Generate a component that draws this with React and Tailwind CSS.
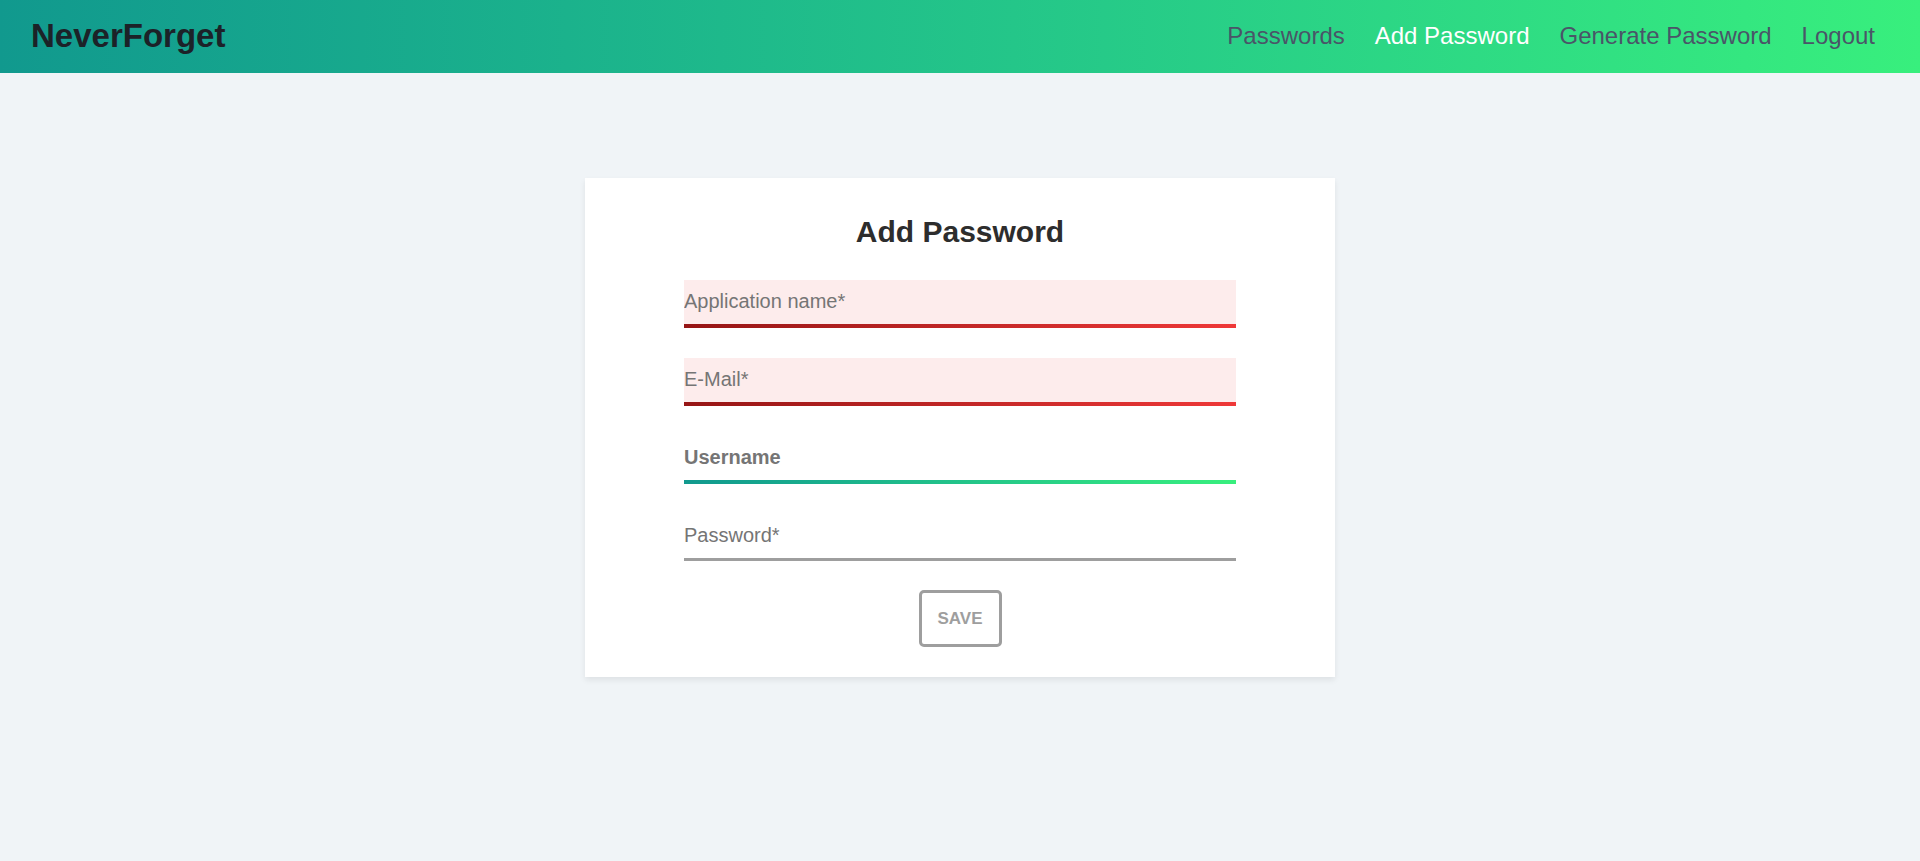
import { useState } from 'react';

const links = ['Passwords', 'Add Password', 'Generate Password', 'Logout'];

const Field = ({ placeholder, type = 'text', bar, filled, bold }) => (
    <div className="flex flex-col w-full">
        <input
            type={type}
            placeholder={placeholder}
            className={`w-full h-[44px] px-0 pb-[2px] text-[20px] outline-none text-[#333] placeholder:text-[#757575] ${filled ? 'bg-[#fdecec]' : 'bg-white'} ${bold ? 'placeholder:font-bold placeholder:text-[#666]' : ''}`}
        />
        <div className={bar} />
    </div>
);

const App = () => {
    const [active] = useState('Add Password');

    return (
        <div className="min-h-[861px] bg-[#f0f4f7] font-['Liberation_Sans',Arial,sans-serif]">
            <header className="h-[73px] flex items-center justify-between pl-[31px] pr-[45px] bg-linear-to-r from-[#11998e] to-[#38ef7d]">
                <div className="text-[33px] font-bold text-[#1c2228] leading-none -mt-[3px]">NeverForget</div>
                <nav className="flex items-center gap-[30px] -mt-[2px]">
                    {links.map(link => (
                        <a
                            key={link}
                            href="#"
                            className={`text-[24px] leading-none ${link === active ? 'text-white' : 'text-[#4a5568]'}`}
                        >
                            {link}
                        </a>
                    ))}
                </nav>
            </header>

            <div className="flex justify-center pt-[105px]">
                <form className="w-[750px] bg-white shadow-[0_3px_6px_rgba(0,0,0,0.08)] pt-[36px] pb-[30px] flex flex-col items-center">
                    <h1 className="text-[30px] leading-[36px] font-bold text-[#2d2d2d] mb-[30px]">Add Password</h1>

                    <div className="w-[552px] flex flex-col gap-[30px]">
                        <Field placeholder="Application name*" filled bar="h-[4px] bg-linear-to-r from-[#961515] to-[#ef3838]" />
                        <Field placeholder="E-Mail*" type="email" filled bar="h-[4px] bg-linear-to-r from-[#961515] to-[#ef3838]" />
                        <Field placeholder="Username" bold bar="h-[4px] bg-linear-to-r from-[#11998e] to-[#38ef7d]" />
                        <Field placeholder="Password*" type="password" bar="h-[3px] bg-[#9e9e9e]" />
                    </div>

                    <button
                        type="submit"
                        className="mt-[29px] w-[83px] h-[57px] border-[3px] border-[#9e9e9e] rounded-[5px] bg-white text-[17px] font-bold text-[#9e9e9e]"
                    >
                        SAVE
                    </button>
                </form>
            </div>
        </div>
    );
};

export default App;
